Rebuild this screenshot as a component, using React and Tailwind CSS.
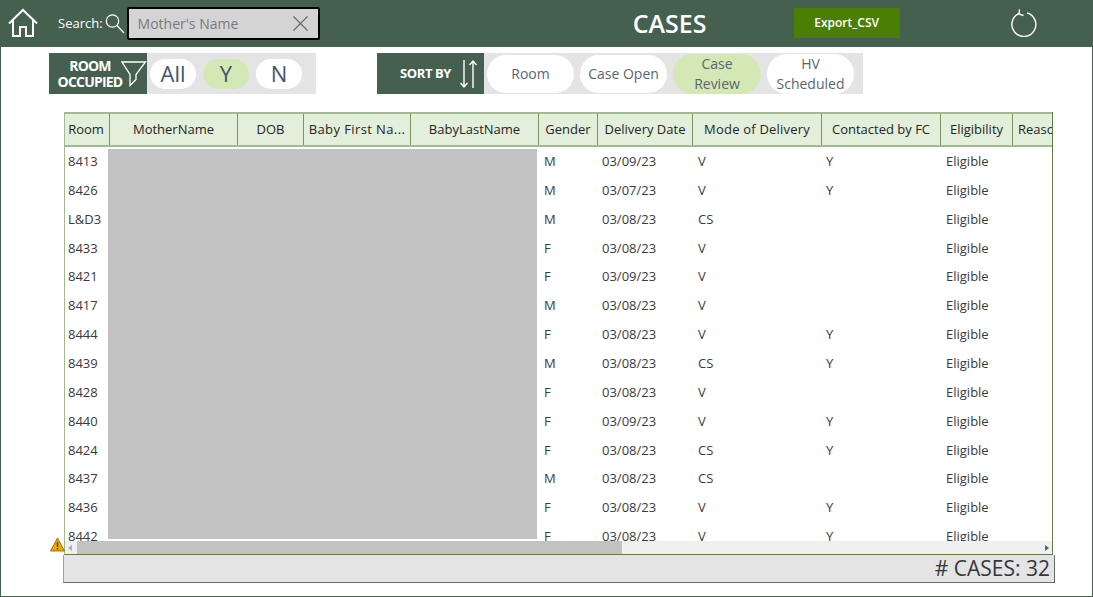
import { X } from 'lucide-react';

const font = { fontFamily: '"Open Sans", "Noto Sans", sans-serif' };

const columns = [
  { label: 'Room', w: 'w-[45px] pr-[2px]' },
  { label: 'MotherName', w: 'w-[128px]' },
  { label: 'DOB', w: 'w-[66px]' },
  { label: 'Baby First Na...', w: 'w-[107px] tracking-[0.4px]' },
  { label: 'BabyLastName', w: 'w-[128px]' },
  { label: 'Gender', w: 'w-[59px]' },
  { label: 'Delivery Date', w: 'w-[95px]' },
  { label: 'Mode of Delivery', w: 'w-[129px] tracking-[0.2px]' },
  { label: 'Contacted by FC', w: 'w-[119px]' },
  { label: 'Eligibility', w: 'w-[72px]' },
  { label: 'Reason', w: 'w-[60px]', clip: true },
];

const rows = [
  ['8413', 'M', '03/09/23', 'V', 'Y'],
  ['8426', 'M', '03/07/23', 'V', 'Y'],
  ['L&D3', 'M', '03/08/23', 'CS', ''],
  ['8433', 'F', '03/08/23', 'V', ''],
  ['8421', 'F', '03/09/23', 'V', ''],
  ['8417', 'M', '03/08/23', 'V', ''],
  ['8444', 'F', '03/08/23', 'V', 'Y'],
  ['8439', 'M', '03/08/23', 'CS', 'Y'],
  ['8428', 'F', '03/08/23', 'V', ''],
  ['8440', 'F', '03/09/23', 'V', 'Y'],
  ['8424', 'F', '03/08/23', 'CS', 'Y'],
  ['8437', 'M', '03/08/23', 'CS', ''],
  ['8436', 'F', '03/08/23', 'V', 'Y'],
  ['8442', 'F', '03/08/23', 'V', 'Y'],
];

const HomeIcon = () => (
  <svg width="30" height="30" viewBox="0 0 30 30" fill="none" stroke="white" strokeWidth="2">
    <path d="M1 15.5 15 2l14 13.5" />
    <path d="M5 12v16h7v-9h6v9h7V12" />
  </svg>
);

const SearchIcon = () => (
  <svg width="20" height="22" viewBox="0 0 20 22" fill="none" stroke="white" strokeWidth="1.2">
    <circle cx="7.500" cy="8" r="6.200" />
    <path d="M12 12.500 19 20" />
  </svg>
);

const RefreshIcon = () => (
  <svg width="28" height="28" viewBox="0 0 28 28" fill="none" stroke="white" strokeWidth="1.4">
    <path d="M9 4.500a12 12 0 1 0 8-.6" />
    <path d="M9.500 0.500 9 5l4.500 1.500" />
  </svg>
);

const SortIcon = () => (
  <svg width="20" height="30" viewBox="0 0 20 30" fill="none" stroke="white" strokeWidth="1.4">
    <path d="M5 1v27M1.500 24 5 28l3.500-4" />
    <path d="M14 29V2M10.500 6 14 2l3.500 4" />
  </svg>
);

const FunnelIcon = () => (
  <svg width="26" height="26" viewBox="0 0 26 26" fill="none" stroke="white" strokeWidth="1.3">
    <path d="M1 1h23.500L15 13.500v5L9 24.500V13.500Z" />
  </svg>
);

const Pill = ({ children, on, className }) => (
  <div className={`flex items-center justify-center rounded-full text-center ${on ? 'bg-[#d3e8b5]' : 'bg-white'} ${className}`}>
    {children}
  </div>
);

export default function App() {
  return (
    <div style={font} className="relative w-[1093px] h-[597px] overflow-hidden bg-white border-x border-b border-[#466050]">
      {/* header */}
      <div className="-mx-px flex items-center h-[47px] bg-[#466050] text-white">
        <div className="ml-[8px] mt-[-1px] w-[30px]"><HomeIcon /></div>
        <span className="ml-[20px] text-[13px] font-medium">Search:</span>
        <div className="ml-[2px] mt-[1px]"><SearchIcon /></div>
        <div className="ml-[2px] flex items-center justify-between w-[193px] h-[33px] pl-[9px] pr-[4px] bg-[#d4d4d4] border-2 border-black rounded-[2px]">
          <span className="text-[14px] text-[#7a7a7a]">Mother's Name</span>
          <X size={27} strokeWidth={1} className="text-[#666]" />
        </div>
        <div className="ml-[313px] w-[74px] text-center text-[25px] font-semibold whitespace-nowrap">CASES</div>
        <div className="ml-[87px] mt-[-2px] flex items-center justify-center w-[106px] h-[30px] bg-[#4a7f04] text-[12px] font-semibold">Export_CSV</div>
        <div className="ml-[110px] mt-[-2px]"><RefreshIcon /></div>
      </div>

      {/* filters */}
      <div className="flex h-[41px] mt-[6px] ml-[48px]">
        <div className="flex items-center w-[98px] h-full bg-[#466050] text-white">
          <div className="ml-[7px] w-[68px] text-center text-[14px] leading-[16px] font-bold tracking-[-0.8px]">ROOM OCCUPIED</div>
          <div className="-ml-[3px]"><FunnelIcon /></div>
        </div>
        <div className="flex items-center gap-[7px] pl-[3px] w-[169px] h-full bg-[#e4e4e4] text-[22px] font-medium text-[#44546a]">
          <Pill className="w-[46px] h-[30px]">All</Pill>
          <Pill on className="w-[46px] h-[30px]">Y</Pill>
          <Pill className="w-[46px] h-[30px]">N</Pill>
        </div>

        <div className="flex items-center w-[107px] h-full ml-[61px] bg-[#466050] text-white">
          <span className="ml-[23px] w-[59px] text-[13px] font-bold tracking-[-0.4px] whitespace-nowrap">SORT BY</span>
          <SortIcon />
        </div>
        <div className="flex items-center gap-[6px] pl-[3px] w-[379px] h-full bg-[#e4e4e4] text-[14px] leading-[20px] text-[#5a6672]">
          <Pill className="w-[87px] h-[38px]">Room</Pill>
          <Pill className="w-[87px] h-[38px]">Case Open</Pill>
          <Pill on className="w-[88px] h-[40px] px-[14px]">Case Review</Pill>
          <Pill className="w-[87px] h-[40px]">HV Scheduled</Pill>
        </div>
      </div>

      {/* table */}
      <div className="relative ml-[63px] mt-[18px] w-[989px] h-[443px] border-x border-b border-l-[#a4b893] border-r-[#5f7d46] border-b-[#5f7d46]">
        <div className="flex h-[35px] overflow-hidden bg-[#e2efdb] border-y-2 border-[#a4b893] text-[13px] text-[#252525]">
          {columns.map((c) => (
            <div
              key={c.label}
              className={`flex items-center shrink-0 h-full whitespace-nowrap overflow-hidden border-r border-[#7d9565] ${c.w} ${c.clip ? 'pl-[5px]' : 'justify-center'}`}
            >
              {c.label}
            </div>
          ))}
        </div>

        <div className="h-[394px] overflow-hidden pt-[0.4px] text-[13px] text-[#3a3a3a]">
          {rows.map((r) => (
            <div key={r[0]} className="flex items-center h-[28.85px]">
              <div className="w-[479px] pl-[3px]">{r[0]}</div>
              <div className="w-[58px]">{r[1]}</div>
              <div className="w-[96px]">{r[2]}</div>
              <div className="w-[128px]">{r[3]}</div>
              <div className="w-[120px]">{r[4]}</div>
              <div>Eligible</div>
            </div>
          ))}
        </div>

        {/* redacted names */}
        <div className="absolute left-[43px] top-[37px] w-[429px] h-[390px] bg-[#c2c2c2]" />

        {/* scrollbar */}
        <div className="flex items-center h-[13px] bg-[#f0f0f0]">
          <div className="ml-[3px] w-0 h-0 border-y-[3px] border-y-transparent border-r-[4px] border-r-[#b0b0b0]" />
          <div className="ml-[5px] w-[545px] h-full bg-[#c2c2c2]" />
          <div className="ml-[423px] w-0 h-0 border-y-[3px] border-y-transparent border-l-[4px] border-l-[#606060]" />
        </div>

        {/* warning */}
        <svg className="absolute -left-[15px] top-[425px]" width="15" height="15" viewBox="0 0 15 15">
          <path d="M7.500 1 14.500 14H.5Z" fill="#f5a800" stroke="#7a5a10" strokeWidth="0.8" />
          <path d="M7.500 5v5M7.500 11v1.500" stroke="#4a3500" strokeWidth="1.3" />
        </svg>
      </div>

      {/* footer */}
      <div className="flex items-center justify-end ml-[62px] w-[992px] h-[28px] pr-[4px] bg-[#e4e4e4] border-x border-b border-l-[#96a89a] border-r-[#5a7362] border-b-[#5a7362] text-[21px] font-medium text-[#33373b]">
        # CASES: 32
      </div>
    </div>
  );
}
